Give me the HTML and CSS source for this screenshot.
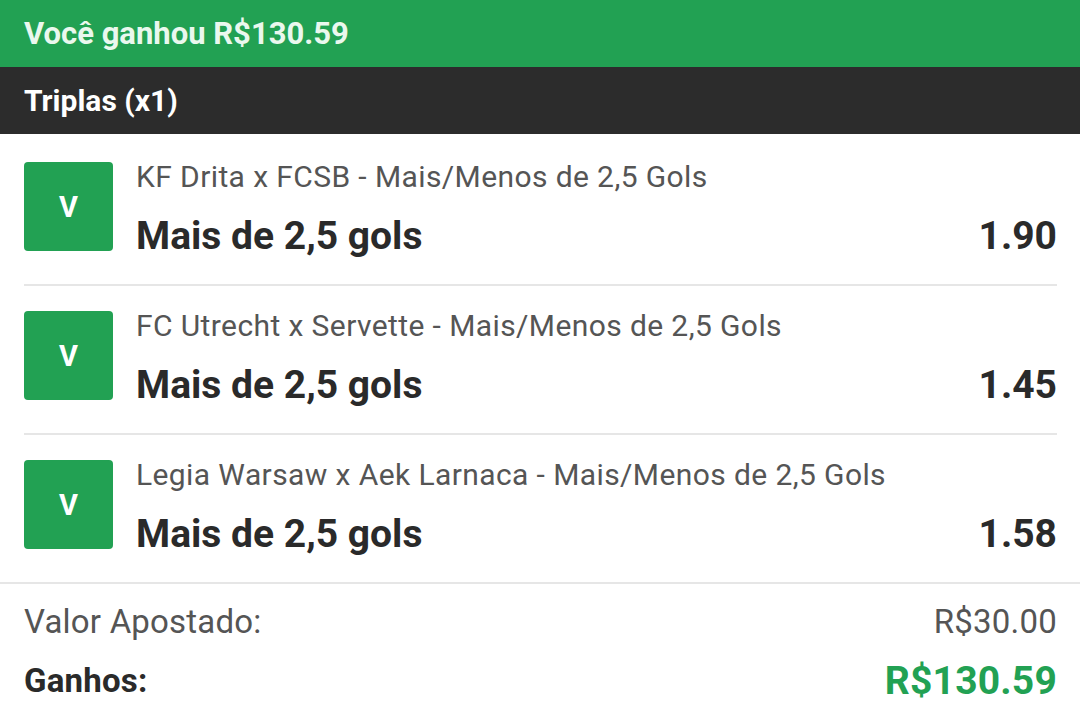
FILE: index.html
```html
<!DOCTYPE html>
<html lang="pt-BR">

<head>
    <meta charset="UTF-8">
    <meta name="viewport" content="width=device-width, initial-scale=1.0">
    <title>Bilhete</title>
    <link rel="stylesheet" href="styles.css">
</head>

<body>
    <div class="win-banner">Você ganhou R$130.59</div>
    <div class="bet-type">Triplas (x1)</div>

    <div class="selections">
        <div class="selection">
            <div class="status">V</div>
            <div class="selection-info">
                <p class="market">KF Drita x FCSB - Mais/Menos de 2,5 Gols</p>
                <div class="pick">
                    <span>Mais de 2,5 gols</span>
                    <span class="odds">1.90</span>
                </div>
            </div>
        </div>
        <div class="selection">
            <div class="status">V</div>
            <div class="selection-info">
                <p class="market">FC Utrecht x Servette - Mais/Menos de 2,5 Gols</p>
                <div class="pick">
                    <span>Mais de 2,5 gols</span>
                    <span class="odds">1.45</span>
                </div>
            </div>
        </div>
        <div class="selection">
            <div class="status">V</div>
            <div class="selection-info">
                <p class="market">Legia Warsaw x Aek Larnaca - Mais/Menos de 2,5 Gols</p>
                <div class="pick">
                    <span>Mais de 2,5 gols</span>
                    <span class="odds">1.58</span>
                </div>
            </div>
        </div>
    </div>

    <footer class="summary">
        <div class="summary-row">
            <span>Valor Apostado:</span>
            <span>R$30.00</span>
        </div>
        <div class="summary-row total">
            <span>Ganhos:</span>
            <span class="payout">R$130.59</span>
        </div>
    </footer>
</body>

</html>
```

FILE: styles.css
```css
body {
    font-family: Roboto, "Noto Sans", sans-serif;
    background-color: #fff;
    color: #2a2a2a;
    margin: 0;
    overflow: hidden;
}

.win-banner {
    height: 67px;
    display: flex;
    align-items: center;
    padding: 0 24px;
    background-color: #22a153;
    color: #eaf8ee;
    font-size: 31px;
    font-weight: bold;
}

.bet-type {
    height: 67px;
    display: flex;
    align-items: center;
    padding: 0 24px;
    background-color: #2c2c2c;
    color: #fff;
    font-size: 30px;
    font-weight: bold;
}

.selections {
    padding: 3px 23px 0 24px;
}

.selection {
    display: flex;
    gap: 23px;
    padding: 25px 0 33px;
    border-bottom: 2px solid #e6e6e6;
}

.selection:last-child {
    border-bottom: none;
}

.status {
    flex: none;
    width: 89px;
    height: 89px;
    display: flex;
    align-items: center;
    justify-content: center;
    background-color: #22a153;
    border-radius: 4px;
    color: #fff;
    font-size: 29px;
    font-weight: bold;
}

.selection-info {
    flex: 1;
    height: 89px;
    margin-top: -1px;
}

.market {
    margin: 0;
    font-size: 30px;
    letter-spacing: 0.4px;
    line-height: 32px;
    color: #555;
    white-space: nowrap;
}

.pick {
    display: flex;
    justify-content: space-between;
    margin-top: 21px;
    font-size: 39px;
    line-height: 44px;
    font-weight: bold;
}

.summary {
    border-top: 2px solid #e6e6e6;
    padding: 18px 23px 0 24px;
}

.summary-row {
    display: flex;
    justify-content: space-between;
    font-size: 33px;
    letter-spacing: 0.2px;
    line-height: 40px;
    color: #555;
}

.summary-row.total {
    margin-top: 19px;
    font-weight: bold;
    color: #2a2a2a;
}

.payout {
    font-size: 39px;
    color: #22a153;
}
```
